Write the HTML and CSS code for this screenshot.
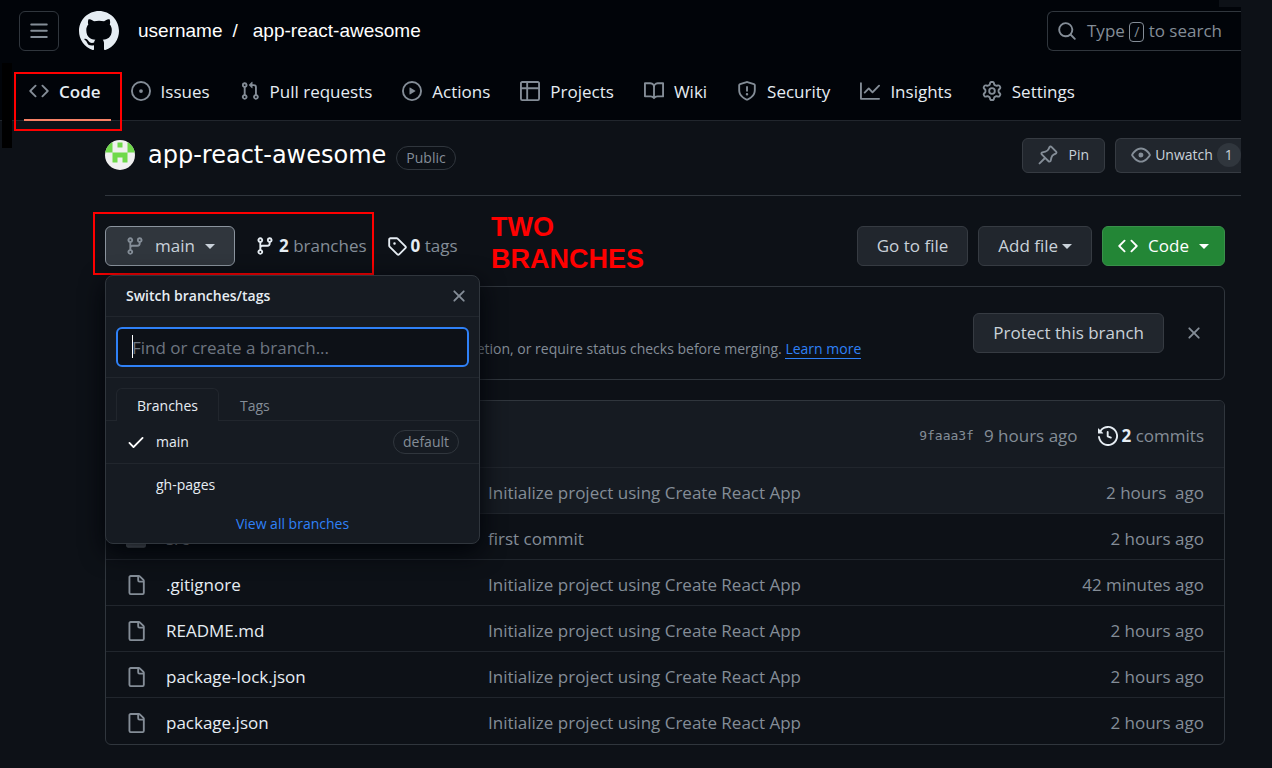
FILE: index.html
```html
<!DOCTYPE html>
<html lang="en">
<head>
<meta charset="utf-8">
<title>username/app-react-awesome</title>
<link rel="stylesheet" href="styles.css">
</head>
<body>
<svg class="sprite" aria-hidden="true">
  <symbol id="i-bars" viewBox="0 0 16 16"><path d="M1 2.75A.75.75 0 0 1 1.75 2h12.5a.75.75 0 0 1 0 1.5H1.75A.75.75 0 0 1 1 2.75Zm0 5A.75.75 0 0 1 1.75 7h12.5a.75.75 0 0 1 0 1.5H1.75A.75.75 0 0 1 1 7.75ZM1.75 12h12.5a.75.75 0 0 1 0 1.5H1.75a.75.75 0 0 1 0-1.5Z"/></symbol>
  <symbol id="i-mark" viewBox="0 0 16 16"><path d="M8 0c4.42 0 8 3.58 8 8a8.013 8.013 0 0 1-5.45 7.59c-.4.08-.55-.17-.55-.38 0-.27.01-1.13.01-2.2 0-.75-.25-1.23-.54-1.48 1.78-.2 3.65-.88 3.65-3.95 0-.88-.31-1.59-.82-2.15.08-.2.36-1.02-.08-2.12 0 0-.67-.22-2.2.82-.64-.18-1.32-.27-2-.27-.68 0-1.36.09-2 .27-1.53-1.03-2.2-.82-2.2-.82-.44 1.1-.16 1.92-.08 2.12-.51.56-.82 1.28-.82 2.15 0 3.06 1.86 3.75 3.64 3.95-.23.2-.44.55-.51 1.07-.46.21-1.61.55-2.33-.66-.15-.24-.6-.83-1.23-.82-.67.01-.27.38.01.53.34.19.73.9.82 1.13.16.45.68 1.31 2.69.94 0 .67.01 1.3.01 1.49 0 .21-.15.45-.55.38A7.995 7.995 0 0 1 0 8c0-4.42 3.58-8 8-8Z"/></symbol>
  <symbol id="i-search" viewBox="0 0 16 16"><path d="M10.68 11.74a6 6 0 0 1-7.922-8.982 6 6 0 0 1 8.982 7.922l3.04 3.04a.749.749 0 0 1-.326 1.275.749.749 0 0 1-.734-.215ZM11.5 7a4.499 4.499 0 1 0-8.997 0A4.499 4.499 0 0 0 11.5 7Z"/></symbol>
  <symbol id="i-code" viewBox="0 0 16 16"><path d="m11.28 3.22 4.25 4.25a.75.75 0 0 1 0 1.06l-4.25 4.25a.749.749 0 0 1-1.275-.326.749.749 0 0 1 .215-.734L13.94 8l-3.72-3.72a.749.749 0 0 1 .326-1.275.749.749 0 0 1 .734.215Zm-6.56 0a.751.751 0 0 1 1.042.018.751.751 0 0 1 .018 1.042L2.06 8l3.72 3.72a.749.749 0 0 1-.326 1.275.749.749 0 0 1-.734-.215L.47 8.53a.75.75 0 0 1 0-1.06Z"/></symbol>
  <symbol id="i-issue" viewBox="0 0 16 16"><path d="M8 9.5a1.5 1.5 0 1 0 0-3 1.5 1.5 0 0 0 0 3Z"/><path d="M8 0a8 8 0 1 1 0 16A8 8 0 0 1 8 0ZM1.5 8a6.5 6.5 0 1 0 13 0 6.5 6.5 0 0 0-13 0Z"/></symbol>
  <symbol id="i-pull" viewBox="0 0 16 16"><path d="M1.5 3.25a2.25 2.25 0 1 1 3 2.122v5.256a2.251 2.251 0 1 1-1.5 0V5.372A2.25 2.25 0 0 1 1.5 3.25Zm5.677-.177L9.573.677A.25.25 0 0 1 10 .854V2.5h1A2.5 2.5 0 0 1 13.5 5v5.628a2.251 2.251 0 1 1-1.5 0V5a1 1 0 0 0-1-1h-1v1.646a.25.25 0 0 1-.427.177L7.177 3.427a.25.25 0 0 1 0-.354ZM3.75 2.5a.75.75 0 1 0 0 1.5.75.75 0 0 0 0-1.5Zm0 9.5a.75.75 0 1 0 0 1.5.75.75 0 0 0 0-1.5Zm8.25.75a.75.75 0 1 0 1.5 0 .75.75 0 0 0-1.5 0Z"/></symbol>
  <symbol id="i-play" viewBox="0 0 16 16"><path d="M8 0a8 8 0 1 1 0 16A8 8 0 0 1 8 0ZM1.5 8a6.5 6.5 0 1 0 13 0 6.5 6.5 0 0 0-13 0Zm4.879-2.773 4.264 2.559a.25.25 0 0 1 0 .428l-4.264 2.559A.25.25 0 0 1 6 10.559V5.442a.25.25 0 0 1 .379-.215Z"/></symbol>
  <symbol id="i-table" viewBox="0 0 16 16"><path d="M0 1.75C0 .784.784 0 1.75 0h12.5C15.216 0 16 .784 16 1.75v12.5A1.75 1.75 0 0 1 14.25 16H1.75A1.75 1.75 0 0 1 0 14.25ZM6.5 6.5v8h7.75a.25.25 0 0 0 .25-.25V6.5Zm8-1.5V1.75a.25.25 0 0 0-.25-.25H6.5V5Zm-13 1.5v7.75c0 .138.112.25.25.25H5v-8ZM5 5V1.5H1.75a.25.25 0 0 0-.25.25V5Z"/></symbol>
  <symbol id="i-book" viewBox="0 0 16 16"><path d="M0 1.75A.75.75 0 0 1 .75 1h4.253c1.227 0 2.317.59 3 1.501A3.743 3.743 0 0 1 11.006 1h4.245a.75.75 0 0 1 .75.75v10.5a.75.75 0 0 1-.75.75h-4.507a2.25 2.25 0 0 0-1.591.659l-.622.621a.75.75 0 0 1-1.06 0l-.622-.621A2.25 2.25 0 0 0 5.258 13H.75a.75.75 0 0 1-.75-.75Zm7.251 10.324.004-5.073-.002-2.253A2.25 2.25 0 0 0 5.003 2.5H1.5v9h3.757a3.75 3.75 0 0 1 1.994.574ZM8.755 4.75l-.004 7.322a3.752 3.752 0 0 1 1.992-.572H14.5v-9h-3.495a2.25 2.25 0 0 0-2.25 2.25Z"/></symbol>
  <symbol id="i-shield" viewBox="0 0 16 16"><path d="M7.467.133a1.748 1.748 0 0 1 1.066 0l5.25 1.68A1.75 1.75 0 0 1 15 3.48V7c0 1.566-.32 3.182-1.303 4.682-.983 1.498-2.585 2.813-5.032 3.855a1.697 1.697 0 0 1-1.33 0c-2.447-1.042-4.049-2.357-5.032-3.855C1.32 10.182 1 8.566 1 7V3.48a1.75 1.75 0 0 1 1.217-1.667Zm.61 1.429a.25.25 0 0 0-.153 0l-5.25 1.68a.25.25 0 0 0-.174.238V7c0 1.358.275 2.666 1.057 3.86.784 1.194 2.121 2.34 4.366 3.297a.196.196 0 0 0 .154 0c2.245-.956 3.582-2.104 4.366-3.298C13.225 9.666 13.5 8.36 13.5 7V3.48a.251.251 0 0 0-.174-.237l-5.25-1.68ZM8.75 4.75v3a.75.75 0 0 1-1.5 0v-3a.75.75 0 0 1 1.5 0ZM9 10.5a1 1 0 1 1-2 0 1 1 0 0 1 2 0Z"/></symbol>
  <symbol id="i-graph" viewBox="0 0 16 16"><path d="M1.5 1.75V13.5h13.75a.75.75 0 0 1 0 1.5H.75a.75.75 0 0 1-.75-.75V1.75a.75.75 0 0 1 1.5 0Zm14.28 2.53-5.25 5.25a.75.75 0 0 1-1.06 0L7 7.06 4.28 9.78a.751.751 0 0 1-1.042-.018.751.751 0 0 1-.018-1.042l3.25-3.25a.75.75 0 0 1 1.06 0L10 7.94l4.72-4.72a.751.751 0 0 1 1.042.018.751.751 0 0 1 .018 1.042Z"/></symbol>
  <symbol id="i-gear" viewBox="0 0 16 16"><path d="M8 0a8.2 8.2 0 0 1 .701.031C9.444.095 9.99.645 10.16 1.29l.288 1.107c.018.066.079.158.212.224.231.114.454.243.668.386.123.082.233.09.299.071l1.103-.303c.644-.176 1.392.021 1.82.63.27.385.506.792.704 1.218.315.675.111 1.422-.364 1.891l-.814.806c-.049.048-.098.147-.088.294.016.257.016.515 0 .772-.01.147.038.246.088.294l.814.806c.475.469.679 1.216.364 1.891a7.977 7.977 0 0 1-.704 1.217c-.428.61-1.176.807-1.82.63l-1.102-.302c-.067-.019-.177-.011-.3.071a5.909 5.909 0 0 1-.668.386c-.133.066-.194.158-.211.224l-.29 1.106c-.168.646-.715 1.196-1.458 1.26a8.006 8.006 0 0 1-1.402 0c-.743-.064-1.289-.614-1.458-1.26l-.289-1.106c-.018-.066-.079-.158-.212-.224a5.738 5.738 0 0 1-.668-.386c-.123-.082-.233-.09-.299-.071l-1.103.303c-.644.176-1.392-.021-1.82-.63a8.12 8.12 0 0 1-.704-1.218c-.315-.675-.111-1.422.363-1.891l.815-.806c.05-.048.098-.147.088-.294a6.214 6.214 0 0 1 0-.772c.01-.147-.038-.246-.088-.294l-.815-.806C.635 6.045.431 5.298.746 4.623a7.92 7.92 0 0 1 .704-1.217c.428-.61 1.176-.807 1.82-.63l1.102.302c.067.019.177.011.3-.071.214-.143.437-.272.668-.386.133-.066.194-.158.211-.224l.29-1.106C6.009.645 6.556.095 7.299.03 7.53.01 7.764 0 8 0Zm-.571 1.525c-.036.003-.108.036-.137.146l-.289 1.105c-.147.561-.549.967-.998 1.189-.173.086-.34.183-.5.29-.417.278-.97.423-1.529.27l-1.103-.303c-.109-.03-.175.016-.195.045-.22.312-.412.644-.573.99-.014.031-.021.11.059.19l.815.806c.411.406.562.957.53 1.456a4.709 4.709 0 0 0 0 .582c.032.499-.119 1.05-.53 1.456l-.815.806c-.081.08-.073.159-.059.19.162.346.353.677.573.989.02.03.085.076.195.046l1.102-.303c.56-.153 1.113-.008 1.53.27.161.107.328.204.501.29.447.222.85.629.997 1.189l.289 1.105c.029.109.101.143.137.146a6.6 6.6 0 0 0 1.142 0c.036-.003.108-.036.137-.146l.289-1.105c.147-.561.549-.967.998-1.189.173-.086.34-.183.5-.29.417-.278.97-.423 1.529-.27l1.103.303c.109.029.175-.016.195-.045.22-.313.411-.644.573-.99.014-.031.021-.11-.059-.19l-.815-.806c-.411-.406-.562-.957-.53-1.456a4.709 4.709 0 0 0 0-.582c-.032-.499.119-1.05.53-1.456l.815-.806c.081-.08.073-.159.059-.19a6.464 6.464 0 0 0-.573-.989c-.02-.03-.085-.076-.195-.046l-1.102.303c-.56.153-1.113.008-1.53-.27a4.44 4.44 0 0 0-.501-.29c-.447-.222-.85-.629-.997-1.189l-.289-1.105c-.029-.11-.101-.143-.137-.146a6.6 6.6 0 0 0-1.142 0ZM11 8a3 3 0 1 1-6 0 3 3 0 0 1 6 0ZM9.5 8a1.5 1.5 0 1 0-3.001.001A1.5 1.5 0 0 0 9.5 8Z"/></symbol>
  <symbol id="i-pin" viewBox="0 0 16 16"><path d="m11.294.984 3.722 3.722a1.75 1.75 0 0 1-.504 2.826l-1.327.613a3.089 3.089 0 0 0-1.707 2.084l-.584 2.454c-.317 1.332-1.972 1.8-2.94.832L5.75 11.311 1.78 15.28a.749.749 0 1 1-1.06-1.06l3.969-3.97-2.204-2.204c-.968-.968-.5-2.623.832-2.94l2.454-.584a3.08 3.08 0 0 0 2.084-1.707l.613-1.327a1.75 1.75 0 0 1 2.826-.504ZM6.283 9.723l2.732 2.731a.25.25 0 0 0 .42-.119l.584-2.454a4.586 4.586 0 0 1 2.537-3.098l1.328-.613a.25.25 0 0 0 .072-.404l-3.722-3.722a.25.25 0 0 0-.404.072l-.613 1.328a4.584 4.584 0 0 1-3.098 2.537l-2.454.584a.25.25 0 0 0-.119.42l2.731 2.732Z"/></symbol>
  <symbol id="i-eye" viewBox="0 0 16 16"><path d="M8 2c1.981 0 3.671.992 4.933 2.078 1.27 1.091 2.187 2.345 2.637 3.023a1.62 1.62 0 0 1 0 1.798c-.45.678-1.367 1.932-2.637 3.023C11.67 13.008 9.981 14 8 14c-1.981 0-3.671-.992-4.933-2.078C1.797 10.83.88 9.576.43 8.898a1.62 1.62 0 0 1 0-1.798c.45-.677 1.367-1.931 2.637-3.022C4.33 2.992 6.019 2 8 2ZM1.679 7.932a.12.12 0 0 0 0 .136c.411.622 1.241 1.75 2.366 2.717C5.176 11.758 6.527 12.5 8 12.5c1.473 0 2.825-.742 3.955-1.715 1.124-.967 1.954-2.096 2.366-2.717a.12.12 0 0 0 0-.136c-.412-.621-1.242-1.75-2.366-2.717C10.824 4.242 9.473 3.5 8 3.5c-1.473 0-2.825.742-3.955 1.715-1.124.967-1.954 2.096-2.366 2.717ZM8 10a2 2 0 1 1-.001-3.999A2 2 0 0 1 8 10Z"/></symbol>
  <symbol id="i-branch" viewBox="0 0 16 16"><path d="M9.5 3.25a2.25 2.25 0 1 1 3 2.122V6A2.5 2.5 0 0 1 10 8.5H6a1 1 0 0 0-1 1v1.128a2.251 2.251 0 1 1-1.5 0V5.372a2.25 2.25 0 1 1 1.5 0v1.836A2.493 2.493 0 0 1 6 7h4a1 1 0 0 0 1-1v-.628A2.25 2.25 0 0 1 9.5 3.25Zm-6 0a.75.75 0 1 0 1.5 0 .75.75 0 0 0-1.5 0Zm8.25-.75a.75.75 0 1 0 0 1.5.75.75 0 0 0 0-1.5ZM4.25 12a.75.75 0 1 0 0 1.5.75.75 0 0 0 0-1.5Z"/></symbol>
  <symbol id="i-tag" viewBox="0 0 16 16"><path d="M1 7.775V2.75C1 1.784 1.784 1 2.75 1h5.025c.464 0 .91.184 1.238.513l6.25 6.25a1.75 1.75 0 0 1 0 2.474l-5.026 5.026a1.75 1.75 0 0 1-2.474 0l-6.25-6.25A1.752 1.752 0 0 1 1 7.775Zm1.5 0c0 .066.026.13.073.177l6.25 6.25a.25.25 0 0 0 .354 0l5.025-5.025a.25.25 0 0 0 0-.354l-6.25-6.25a.25.25 0 0 0-.177-.073H2.75a.25.25 0 0 0-.25.25ZM6 5a1 1 0 1 1 0 2 1 1 0 0 1 0-2Z"/></symbol>
  <symbol id="i-x" viewBox="0 0 16 16"><path d="M3.72 3.72a.75.75 0 0 1 1.06 0L8 6.94l3.22-3.22a.749.749 0 0 1 1.275.326.749.749 0 0 1-.215.734L9.06 8l3.22 3.22a.749.749 0 0 1-.326 1.275.749.749 0 0 1-.734-.215L8 9.06l-3.22 3.22a.751.751 0 0 1-1.042-.018.751.751 0 0 1-.018-1.042L6.94 8 3.72 4.78a.75.75 0 0 1 0-1.06Z"/></symbol>
  <symbol id="i-check" viewBox="0 0 16 16"><path d="M13.78 4.22a.75.75 0 0 1 0 1.06l-7.25 7.25a.75.75 0 0 1-1.06 0L2.22 9.28a.751.751 0 0 1 .018-1.042.751.751 0 0 1 1.042-.018L6 10.94l6.72-6.72a.75.75 0 0 1 1.06 0Z"/></symbol>
  <symbol id="i-history" viewBox="0 0 16 16"><path d="m.427 1.927 1.215 1.215a8.002 8.002 0 1 1-1.6 5.685.75.75 0 1 1 1.493-.154 6.5 6.5 0 1 0 1.18-4.458l1.358 1.358A.25.25 0 0 1 3.896 6H.25A.25.25 0 0 1 0 5.75V2.104a.25.25 0 0 1 .427-.177ZM7.75 4a.75.75 0 0 1 .75.75v2.992l2.028.812a.75.75 0 0 1-.557 1.392l-2.5-1A.751.751 0 0 1 7 8.25v-3.5A.75.75 0 0 1 7.75 4Z"/></symbol>
  <symbol id="i-file" viewBox="0 0 16 16"><path d="M2 1.75C2 .784 2.784 0 3.75 0h6.586c.464 0 .909.184 1.237.513l2.914 2.914c.329.328.513.773.513 1.237v9.586A1.75 1.75 0 0 1 13.25 16h-9.5A1.75 1.75 0 0 1 2 14.25Zm1.75-.25a.25.25 0 0 0-.25.25v12.5c0 .138.112.25.25.25h9.5a.25.25 0 0 0 .25-.25V6h-2.75A1.75 1.75 0 0 1 9 4.25V1.5Zm6.75.062V4.25c0 .138.112.25.25.25h2.688l-.011-.013-2.914-2.914-.013-.011Z"/></symbol>
  <symbol id="i-folder" viewBox="0 0 16 16"><path d="M1.75 1A1.75 1.75 0 0 0 0 2.75v10.5C0 14.216.784 15 1.75 15h12.5A1.75 1.75 0 0 0 16 13.25v-8.5A1.75 1.75 0 0 0 14.25 3H7.5a.25.25 0 0 1-.2-.1l-.9-1.2C6.07 1.26 5.55 1 5 1H1.75Z"/></symbol>
</svg>

<div class="page">
  <header class="header">
    <div class="topbar">
      <button class="menu-button" type="button" aria-label="Open menu"><svg class="icon"><use href="#i-bars"/></svg></button>
      <a class="logo" href="#" aria-label="Home"><svg><use href="#i-mark"/></svg></a>
      <div class="crumbs"><a href="#">username</a><span class="slash">/</span><a href="#">app-react-awesome</a></div>
      <button class="search" type="button"><svg class="icon"><use href="#i-search"/></svg><span>Type <kbd>/</kbd> to search</span></button>
    </div>
    <nav class="tabs" aria-label="Repository">
      <a class="tab current" href="#"><svg class="icon"><use href="#i-code"/></svg><span>Code</span></a>
      <a class="tab" href="#"><svg class="icon"><use href="#i-issue"/></svg><span>Issues</span></a>
      <a class="tab" href="#"><svg class="icon"><use href="#i-pull"/></svg><span>Pull requests</span></a>
      <a class="tab" href="#"><svg class="icon"><use href="#i-play"/></svg><span>Actions</span></a>
      <a class="tab" href="#"><svg class="icon"><use href="#i-table"/></svg><span>Projects</span></a>
      <a class="tab" href="#"><svg class="icon"><use href="#i-book"/></svg><span>Wiki</span></a>
      <a class="tab" href="#"><svg class="icon"><use href="#i-shield"/></svg><span>Security</span></a>
      <a class="tab" href="#"><svg class="icon"><use href="#i-graph"/></svg><span>Insights</span></a>
      <a class="tab" href="#"><svg class="icon"><use href="#i-gear"/></svg><span>Settings</span></a>
    </nav>
  </header>

  <main class="content">
    <div class="repo-head">
      <svg class="avatar" viewBox="0 0 30 30" aria-hidden="true">
        <defs><clipPath id="round"><circle cx="15" cy="15" r="15"/></clipPath></defs>
        <g clip-path="url(#round)">
          <path fill="#f0f0f0" d="M0 0h30v30H0z"/>
          <path fill="#6fd94b" d="M12.500 2.500h5v5h-5zM0 2.500h7.500v10H0zM22.500 2.500H30v10h-7.500zM7.500 12.500h15v10h-5v-5h-5v5h-5z"/>
        </g>
      </svg>
      <h1>app-react-awesome</h1>
      <span class="pill">Public</span>
      <div class="repo-actions">
        <button class="btn small" type="button"><svg class="icon"><use href="#i-pin"/></svg>Pin</button>
        <button class="btn small watch" type="button"><svg class="icon"><use href="#i-eye"/></svg>Unwatch<span class="count">1</span></button>
      </div>
    </div>

    <div class="body">
      <div class="toolbar">
        <div class="picker">
          <button class="btn branch-button" type="button" aria-expanded="true"><svg class="icon"><use href="#i-branch"/></svg>main<span class="caret"></span></button>
          <section class="menu" aria-label="Switch branches/tags">
            <div class="menu-head"><h2>Switch branches/tags</h2><button class="close" type="button" aria-label="Close"><svg class="icon"><use href="#i-x"/></svg></button></div>
            <div class="menu-filter"><input type="text" aria-label="Find or create a branch" placeholder="Find or create a branch..."><span class="cursor"></span></div>
            <div class="menu-tabs"><button class="menu-tab selected" type="button">Branches</button><button class="menu-tab" type="button">Tags</button></div>
            <a class="menu-item" href="#"><svg class="icon"><use href="#i-check"/></svg><span>main</span><span class="pill default">default</span></a>
            <a class="menu-item" href="#"><span class="icon"></span><span>gh-pages</span></a>
            <a class="menu-all" href="#">View all branches</a>
          </section>
        </div>
        <a class="stat" href="#"><svg class="icon"><use href="#i-branch"/></svg><span><strong>2</strong> branches</span></a>
        <a class="stat" href="#"><svg class="icon"><use href="#i-tag"/></svg><span><strong>0</strong> tags</span></a>
        <div class="toolbar-end">
          <button class="btn" type="button">Go to file</button>
          <button class="btn add" type="button">Add file<span class="caret"></span></button>
          <button class="btn primary" type="button"><svg class="icon"><use href="#i-code"/></svg>Code<span class="caret"></span></button>
        </div>
        <div class="mark-branches"></div>
        <p class="note">TWO<br>BRANCHES</p>
      </div>

      <section class="banner">
        <p>Protect this branch from force pushing or deletion, or require status checks before merging. <a href="#">Learn more</a></p>
        <button class="btn" type="button">Protect this branch</button>
        <button class="close" type="button" aria-label="Dismiss"><svg class="icon"><use href="#i-x"/></svg></button>
      </section>

      <section class="files">
        <div class="commit-bar">
          <a class="sha" href="#">9faaa3f</a><span class="when">9 hours ago</span>
          <a class="stat" href="#"><svg class="icon"><use href="#i-history"/></svg><span><strong>2</strong> commits</span></a>
        </div>
        <table>
          <tbody>
            <tr class="hover"><td class="kind"><svg class="icon"><use href="#i-folder"/></svg></td><td class="name"></td><td>Initialize project using Create React App</td><td class="age">2 hours&nbsp; ago</td></tr>
            <tr><td class="kind"><svg class="icon"><use href="#i-folder"/></svg></td><td class="name"><a href="#">src</a></td><td>first commit</td><td class="age">2 hours ago</td></tr>
            <tr><td class="kind"><svg class="icon"><use href="#i-file"/></svg></td><td class="name"><a href="#">.gitignore</a></td><td>Initialize project using Create React App</td><td class="age">42 minutes ago</td></tr>
            <tr><td class="kind"><svg class="icon"><use href="#i-file"/></svg></td><td class="name"><a href="#">README.md</a></td><td>Initialize project using Create React App</td><td class="age">2 hours ago</td></tr>
            <tr><td class="kind"><svg class="icon"><use href="#i-file"/></svg></td><td class="name"><a href="#">package-lock.json</a></td><td>Initialize project using Create React App</td><td class="age">2 hours ago</td></tr>
            <tr><td class="kind"><svg class="icon"><use href="#i-file"/></svg></td><td class="name"><a href="#">package.json</a></td><td>Initialize project using Create React App</td><td class="age">2 hours ago</td></tr>
          </tbody>
        </table>
      </section>
    </div>
  </main>
</div>
</body>
</html>
```
FILE: styles.css
```css
* { box-sizing: border-box; }

body {
  margin: 0;
  background: #0d1117;
  color: #e6edf3;
  font: 17px/24px "Open Sans", "Noto Sans", sans-serif;
}

a { color: inherit; text-decoration: none; }
button { font: inherit; color: inherit; cursor: pointer; }
h1, h2, p { margin: 0; }

.sprite { position: absolute; width: 0; height: 0; }
.icon { width: 20px; height: 20px; flex: none; fill: #848d97; }
.page { margin-right: 31px; overflow: hidden; }

/* Header */
.header {
  position: relative;
  background: #010409;
  border-bottom: 1px solid #21262d;
}
.header::before {
  content: "";
  position: absolute;
  left: 2px;
  top: 63px;
  width: 10px;
  height: 85px;
  background: #000;
}
.header::after {
  content: "";
  position: absolute;
  right: 0;
  top: 0;
  width: 22px;
  height: 7px;
  background: #0d1117;
}
.topbar {
  display: flex;
  align-items: center;
  height: 62px;
  padding-left: 19px;
}
.menu-button {
  display: flex;
  align-items: center;
  justify-content: center;
  width: 40px;
  height: 40px;
  padding: 0;
  border: 1px solid #30363d;
  border-radius: 6px;
  background: none;
}
.logo { display: flex; margin: 0 19px 0 20px; }
.logo svg { width: 40px; height: 40px; fill: #e6edf3; }
.crumbs {
  display: flex;
  font-family: "Liberation Sans", Arial, sans-serif;
  font-size: 19px;
  color: #fff;
}
.slash { margin: 0 15px 0 10px; }
.search {
  display: flex;
  align-items: center;
  gap: 10px;
  width: 194px;
  height: 40px;
  margin-left: auto;
  padding: 0 0 0 9px;
  border: 1px solid #30363d;
  border-right: 0;
  border-radius: 6px 0 0 6px;
  background: none;
  color: #848d97;
  white-space: nowrap;
}
.search kbd {
  display: inline-block;
  width: 15px;
  border: 1px solid #848d97;
  border-radius: 4px;
  font: 14px/18px "Open Sans", sans-serif;
  text-align: center;
}
.tabs {
  display: flex;
  gap: 10px;
  padding-left: 19px;
}
.tab {
  position: relative;
  display: flex;
  align-items: center;
  gap: 10px;
  height: 58px;
  padding: 0 10px;
  white-space: nowrap;
}
.tab span { padding-top: 2px; }
.tab.current { font-weight: 600; }
.tab.current::before {
  content: "";
  position: absolute;
  left: 5px;
  right: 0;
  bottom: -1px;
  height: 2px;
  background: #f78166;
}
.tab.current::after {
  content: "";
  position: absolute;
  inset: 10px -11px -11px -5px;
  border: 2px solid #f00;
}

/* Buttons and pills */
.btn {
  display: flex;
  align-items: center;
  justify-content: center;
  height: 40px;
  padding: 0 19px;
  border: 1px solid #363b42;
  border-radius: 6px;
  background: #21262d;
  color: #c9d1d9;
  white-space: nowrap;
}
.btn.small { height: 35px; font-size: 14px; }
.btn.primary {
  gap: 10px;
  padding: 0 15px;
  border-color: #39914a;
  background: #238636;
  color: #fff;
}
.btn.primary .icon { fill: #fff; }
.btn.add { gap: 4px; }
.caret {
  border: 5px solid transparent;
  border-top-color: currentColor;
  border-bottom: 0;
}
.close {
  display: flex;
  padding: 0;
  border: 0;
  background: none;
}
.pill {
  padding: 0 9px;
  border: 1px solid #30363d;
  border-radius: 12px;
  color: #848d97;
  font-size: 14px;
  line-height: 22px;
}

/* Repository heading */
.content { padding-left: 105px; }
.repo-head {
  display: flex;
  align-items: center;
  height: 75px;
  padding-bottom: 6px;
  border-bottom: 1px solid #30363d;
}
.avatar { width: 30px; height: 30px; margin-right: 13px; }
.repo-head h1 {
  margin-right: 10px;
  font: 24px/30px "DejaVu Sans", Verdana, sans-serif;
  color: #fff;
}
.repo-head .pill { margin-top: 6px; }
.repo-actions { display: flex; gap: 10px; margin-left: auto; }
.repo-actions .small { gap: 10px; padding: 0 15px; }
.repo-actions .watch {
  gap: 4px;
  width: 126px;
  padding-right: 0;
  overflow: hidden;
  border-right: 0;
  border-radius: 6px 0 0 6px;
}
.count {
  flex: none;
  width: 24px;
  border-radius: 12px;
  background: #30363d;
}

/* Toolbar */
.body { margin-right: 16px; }
.toolbar {
  position: relative;
  display: flex;
  align-items: center;
  gap: 20px;
  padding: 30px 0 20px;
}
.picker { position: relative; }
.branch-button {
  width: 130px;
  gap: 10px;
  border-color: #8b949e;
  background: #30363d;
}
.stat {
  display: flex;
  align-items: center;
  gap: 4px;
  color: #848d97;
  white-space: nowrap;
}
.stat .icon { fill: #e6edf3; }
.stat strong { color: #e6edf3; font-weight: 700; }
.toolbar-end { display: flex; gap: 10px; margin-left: auto; }
.mark-branches {
  position: absolute;
  left: -12px;
  top: 16px;
  width: 281px;
  height: 63px;
  border: 2px solid #f00;
}
.note {
  position: absolute;
  left: 386px;
  top: 15px;
  color: #f00;
  font: bold 27px/32px "Liberation Sans", Arial, sans-serif;
}

/* Branch menu */
.menu {
  position: absolute;
  z-index: 2;
  left: 0;
  top: 49px;
  width: 375px;
  border: 1px solid #30363d;
  border-radius: 8px;
  background: #161b22;
  box-shadow: 0 8px 24px #010409;
  font-size: 14px;
}
.menu-head {
  display: flex;
  align-items: center;
  justify-content: space-between;
  height: 41px;
  padding: 0 10px 0 20px;
  border-bottom: 1px solid #21262d;
}
.menu-head h2 { font-size: 14px; font-weight: 600; }
.menu-filter {
  position: relative;
  padding: 10px;
  border-bottom: 1px solid #21262d;
}
.menu-filter input {
  display: block;
  width: 100%;
  height: 40px;
  padding: 0 14px;
  border: 2px solid #2f81f7;
  border-radius: 6px;
  background: #0d1117;
  color: #e6edf3;
  font: inherit;
  font-size: 17px;
}
.menu-filter input::placeholder { color: #6e7681; opacity: 1; }
.cursor {
  position: absolute;
  left: 26px;
  top: 18px;
  width: 1px;
  height: 23px;
  background: #fff;
}
.menu-tabs {
  display: flex;
  padding: 10px 10px 0;
  border-bottom: 1px solid #21262d;
}
.menu-tab {
  height: 33px;
  margin-bottom: -1px;
  padding: 2px 20px 0;
  border: 1px solid transparent;
  border-bottom: 0;
  background: none;
  color: #848d97;
}
.menu-tab.selected {
  border-color: #21262d;
  border-radius: 6px 6px 0 0;
  background: #161b22;
  color: #e6edf3;
}
.menu-item {
  display: flex;
  align-items: center;
  gap: 10px;
  height: 42px;
  padding: 0 20px;
}
.menu-item + .menu-item { border-top: 1px solid #21262d; }
.menu-item .icon { fill: #fff; }
.menu-item .default { margin-left: auto; }
.menu-all {
  display: block;
  padding: 7px 0;
  color: #2f81f7;
  text-align: center;
}

/* Protection banner */
.banner {
  display: flex;
  align-items: center;
  justify-content: flex-end;
  height: 94px;
  padding-right: 20px;
  border: 1px solid #30363d;
  border-radius: 6px;
}
.banner p {
  margin: 32px 112px 0 0;
  color: #848d97;
  font-size: 14px;
  white-space: nowrap;
}
.banner p a { color: #2f81f7; border-bottom: 1px solid #2f81f7; }
.banner .close { margin-left: 20px; }

/* File list */
.files {
  margin: 20px 0;
  overflow: hidden;
  border: 1px solid #30363d;
  border-radius: 6px;
}
.commit-bar {
  display: flex;
  align-items: center;
  justify-content: flex-end;
  height: 66px;
  padding: 3px 20px 0;
  background: #161b22;
  color: #848d97;
}
.sha { font: 13px/24px "DejaVu Sans Mono", monospace; }
.when { margin: 0 20px 0 10px; }
.files table {
  width: 100%;
  border-collapse: collapse;
  table-layout: fixed;
  color: #848d97;
}
.files td {
  height: 46px;
  padding: 4px 0 0;
  border-top: 1px solid #21262d;
}
.files .hover { background: #161b22; }
.files .kind { width: 60px; padding-left: 20px; }
.files .kind .icon { display: block; }
.files .name { width: 322px; color: #e6edf3; }
.files .age { width: 200px; padding-right: 20px; text-align: right; }
```
